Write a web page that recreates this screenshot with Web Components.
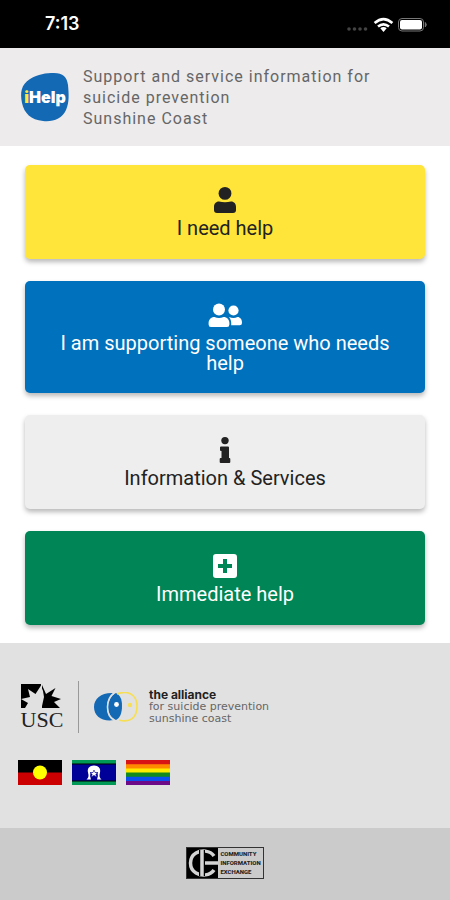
<!DOCTYPE html>
<html lang="en">
<head>
<meta charset="utf-8">
<meta name="viewport" content="width=device-width, initial-scale=1">
<title>iHelp</title>
<style>
  body {
    margin: 0;
    background-color: #fff;
    font-family: Roboto, "Noto Sans", sans-serif;
  }
</style>
</head>
<body>
<help-app></help-app>

<script>
const icons = {
  person: `
    <svg width="28" height="28" viewBox="0 0 28 28" fill="currentColor" aria-hidden="true">
      <circle cx="14" cy="7.4" r="6.4"/>
      <path d="M8 15.500q6 1.500 12 0c3.200 0 5 2.300 5 5.200v3.300q0 3-3 3H6q-3 0-3-3v-3.300c0-2.900 1.800-5.200 5-5.200z"/>
    </svg>`,
  people: `
    <svg width="34" height="28" viewBox="0 0 34 28" fill="currentColor" aria-hidden="true">
      <circle cx="11" cy="8.600" r="6"/>
      <path d="M6.500 16q4.500 2 9 0c3.600 0 5.900 2.700 5.900 6v1.500q0 2.500-2.400 2.500H3q-2.400 0-2.400-2.500V22c0-3.300 2.300-6 5.900-6z"/>
      <circle cx="25.500" cy="9.500" r="5.100"/>
      <path d="M21 16q4.500 1.800 8.500 0c2.500 0 4.500 2.500 4.500 5.200V22q0 2.300-2.300 2.300h-8.500c.3-3.300-.3-6-2.200-8.300z"/>
    </svg>`,
  info: `
    <svg width="28" height="28" viewBox="0 0 28 28" fill="currentColor" aria-hidden="true">
      <circle cx="14" cy="4.600" r="3.700"/>
      <path d="M10 10.500h7q1 0 1 1V22h.300q1 0 1 1v3q0 1-1 1H9.700q-1 0-1-1v-3q0-1 1-1h.800v-7H10q-1 0-1-1v-2.500q0-1 1-1z"/>
    </svg>`,
  plus: `
    <svg width="28" height="28" viewBox="0 0 28 28" fill="currentColor" aria-hidden="true">
      <path fill-rule="evenodd" d="M5 2h18q3 0 3 3v18q0 3-3 3H5q-3 0-3-3V5q0-3 3-3zM12 7v5H7v4h5v5h4v-5h5v-4h-5V7z"/>
    </svg>`
};

class StatusBar extends HTMLElement {
  constructor() {
    super();
    this.attachShadow({ mode: "open" });
  }

  connectedCallback() {
    this.shadowRoot.innerHTML = `
      <style>
        :host {
          display: flex;
          align-items: center;
          justify-content: space-between;
          height: 48px;
          padding: 0 22px 0 45px;
          background-color: #000;
          color: #fff;
        }

        time {
          font: 600 18px/20px Inter, sans-serif;
        }

        svg {
          display: block;
        }
      </style>
      <time>7:13</time>
      <svg width="82" height="18" viewBox="0 0 82 18" aria-label="Wi-Fi on, battery full">
        <g fill="#444">
          <circle cx="3" cy="14" r="1.800"/><circle cx="8.500" cy="14" r="1.800"/>
          <circle cx="14" cy="14" r="1.800"/><circle cx="19.500" cy="14" r="1.800"/>
        </g>
        <g fill="none" stroke="#fff" stroke-width="2.600">
          <path d="M28.600 8q8.900-7.800 17.800 0"/>
          <path d="M32 11.600q5.500-4.600 11 0"/>
        </g>
        <path d="M34.300 13.300q3.200-2.400 6.400 0L37.500 17z" fill="#fff"/>
        <rect x="52.500" y="3.500" width="25" height="12.500" rx="3.500" fill="none" stroke="#777"/>
        <rect x="54" y="5" width="22" height="9.500" rx="2" fill="#fff"/>
        <path d="M79.300 7.500q2 2.200 0 4.400z" fill="#777" stroke="#777"/>
      </svg>
    `;
  }
}

class AppHeader extends HTMLElement {
  constructor() {
    super();
    this.attachShadow({ mode: "open" });
  }

  connectedCallback() {
    this.shadowRoot.innerHTML = `
      <style>
        :host {
          display: flex;
          align-items: center;
          gap: 13px;
          min-height: 98px;
          padding: 0 20px;
          box-sizing: border-box;
          background-color: #edebec;
        }

        svg {
          flex: none;
        }

        p {
          margin: 0;
          color: #666;
          font-size: 16px;
          line-height: 21px;
          letter-spacing: 1px;
        }
      </style>
      <svg width="50" height="50" viewBox="0 0 50 50" role="img" aria-label="iHelp">
        <path d="M34 1C43 1 47 5 48 13c.800 9 1.500 17-2 25-4 9-13 12-23 11C11 48 4 41 2 31 0 20 1 13 10 7 18 2 26 1 34 1z" fill="#1469b5"/>
        <text x="25" y="31" text-anchor="middle" fill="#fff" font-family="Inter, sans-serif" font-size="16" font-weight="900"><tspan fill="#ffe838">i</tspan>Help</text>
      </svg>
      <p><slot></slot></p>
    `;
  }
}

class HelpButton extends HTMLElement {
  constructor() {
    super();
    this.attachShadow({ mode: "open" });
  }

  connectedCallback() {
    this.shadowRoot.innerHTML = `
      <style>
        :host {
          display: block;
          --back: #eee;
          --fore: #222;
        }

        :host([tone="yellow"]) {
          --back: #ffe53a;
        }

        :host([tone="blue"]) {
          --back: #0071bc;
          --fore: #fff;
        }

        :host([tone="green"]) {
          --back: #008556;
          --fore: #fff;
        }

        button {
          display: flex;
          flex-direction: column;
          align-items: center;
          justify-content: center;
          gap: 4px;
          width: 100%;
          min-height: 94px;
          padding: 20px 24px;
          border: none;
          border-radius: 5px;
          background-color: var(--back);
          color: var(--fore);
          box-shadow: 0 3px 5px rgba(0, 0, 0, 0.28);
          font-family: inherit;
          font-size: 20px;
          line-height: 20px;
          cursor: pointer;
        }

        svg {
          display: block;
        }
      </style>
      <button type="button">
        ${icons[this.getAttribute("icon")]}
        <span><slot></slot></span>
      </button>
    `;
  }
}

class PartnerLogos extends HTMLElement {
  constructor() {
    super();
    this.attachShadow({ mode: "open" });
  }

  connectedCallback() {
    this.shadowRoot.innerHTML = `
      <style>
        :host {
          display: flex;
          align-items: center;
        }

        svg {
          flex: none;
        }

        .alliance {
          display: flex;
          align-items: center;
          gap: 11px;
          height: 52px;
          margin-left: 12px;
          padding-left: 15px;
          border-left: 1px solid #999;
        }

        p {
          margin: 0;
          color: #666;
          font: 11px/12px "DejaVu Sans", sans-serif;
        }

        strong {
          display: block;
          color: #222;
          font: 700 12px/12px Inter, sans-serif;
        }
      </style>
      <svg width="48" height="52" viewBox="0 0 48 52" role="img" aria-label="USC">
        <path d="M3 3h20v24H3z"/>
        <path d="M24 27V4l4 9 9.500-6-4 8 9.500 3-7 3 6 6z"/>
        <path d="M23 4.500L17.500 13 10 8l2 8-9 2 7 4-3 5h16z" fill="#e1e1e1"/>
        <path d="M23 5l2 5 1 6-2 9h-1z" fill="#e1e1e1"/>
        <text x="24" y="46" text-anchor="middle" fill="#222" font-family="Liberation Serif, serif" font-size="22">USC</text>
      </svg>
      <div class="alliance">
        <svg width="44" height="30" viewBox="0 0 44 30" aria-hidden="true">
          <path d="M20 1C8 0 0 6 0 15s8 15 20 13q-7-5-7-13T20 1z" fill="#1469b5"/>
          <path d="M22 1c-5 2-8 8-8 14s3 11 8 13c4-2 6-7 6-14S26 3 22 1z" fill="#1469b5"/>
          <path d="M20 1c-4 3-6.500 8-6.500 14S16 26 20 28" fill="none" stroke="#e1e1e1" stroke-width="1.600"/>
          <path d="M23 2C33-2 43 2 43 14S36 31 25 28" fill="none" stroke="#f6df55" stroke-width="1.700"/>
          <circle cx="22.500" cy="12.500" r="2.400" fill="#fff"/>
          <circle cx="36" cy="13" r="2.200" fill="#f6df55"/>
        </svg>
        <p><strong>the alliance</strong>for suicide prevention<br>sunshine coast</p>
      </div>
    `;
  }
}

class FlagRow extends HTMLElement {
  constructor() {
    super();
    this.attachShadow({ mode: "open" });
  }

  connectedCallback() {
    this.shadowRoot.innerHTML = `
      <style>
        :host {
          display: flex;
          gap: 10px;
        }
      </style>
      <svg width="44" height="25" viewBox="0 0 44 25" role="img" aria-label="Aboriginal flag">
        <path d="M0 0h44v13H0z"/>
        <path d="M0 12.500h44V25H0z" fill="#c00"/>
        <circle cx="22" cy="12.500" r="7" fill="#ff0"/>
      </svg>
      <svg width="44" height="25" viewBox="0 0 44 25" role="img" aria-label="Torres Strait Islander flag">
        <path d="M0 0h44v25H0z" fill="#095"/>
        <path d="M0 3.500h44v18H0z" fill="#000"/>
        <path d="M0 4.500h44v16H0z" fill="#009"/>
        <path d="M14.500 19.500q3-2 1.500-7c-1-4 1.500-7 6-7s7 3 6 7q-1.500 5 1.500 7h-4.500q1.500-4 .5-7h-7q-1 3 .5 7z" fill="#fff"/>
        <path d="M22 10l1 2.500h3l-2.200 1.800 1 2.700-2.800-1.600-2.800 1.600 1-2.700L18 12.500h3z" fill="#fff" stroke="#009" stroke-width=".6"/>
      </svg>
      <svg width="44" height="25" viewBox="0 0 44 25" role="img" aria-label="Pride flag">
        <path d="M0 0h44v25H0z" fill="#d91414"/>
        <path d="M0 4.200h44V25H0z" fill="#ff8c00"/>
        <path d="M0 8.400h44V25H0z" fill="#ffed00"/>
        <path d="M0 12.600h44V25H0z" fill="#128a1c"/>
        <path d="M0 16.700h44V25H0z" fill="#0b50ee"/>
        <path d="M0 20.900h44V25H0z" fill="#6d0a87"/>
      </svg>
    `;
  }
}

class ExchangeLogo extends HTMLElement {
  constructor() {
    super();
    this.attachShadow({ mode: "open" });
  }

  connectedCallback() {
    this.shadowRoot.innerHTML = `
      <style>
        :host {
          display: flex;
          border: 1px solid #333;
        }

        svg {
          display: block;
        }

        p {
          margin: 0;
          padding: 1px 2px;
          color: #222;
          font-size: 6px;
          font-weight: 800;
          line-height: 9px;
        }
      </style>
      <svg width="31" height="30" viewBox="0 0 31 30" aria-hidden="true">
        <path d="M0 0h31v30H0z"/>
        <g fill="none" stroke="#d4d4d4" stroke-width="3.500">
          <path d="M27 8C23 2 14 2 9 5S3.500 12 3.500 15 4 22 9 25s14 3 18-3"/>
          <path d="M17 15h14"/>
          <path d="M15 2v26" stroke="#000" stroke-width="6"/>
          <path d="M15 2v26"/>
        </g>
      </svg>
      <p>COMMUNITY<br>INFORMATION<br>EXCHANGE</p>
    `;
  }
}

class HelpApp extends HTMLElement {
  constructor() {
    super();
    this.attachShadow({ mode: "open" });
  }

  connectedCallback() {
    this.shadowRoot.innerHTML = `
      <style>
        :host {
          display: flex;
          flex-direction: column;
          min-height: 100vh;
        }

        main {
          display: flex;
          flex-direction: column;
          gap: 22px;
          padding: 19px 25px 18px;
        }

        .partners {
          display: flex;
          flex-direction: column;
          gap: 27px;
          padding: 38px 18px 43px;
          background-color: #e1e1e1;
        }

        .bottom {
          display: flex;
          flex: 1;
          align-items: center;
          justify-content: center;
          padding: 18px 0 20px;
          background-color: #cbcbcb;
        }
      </style>
      <status-bar></status-bar>
      <app-header>Support and service information for<br>suicide prevention<br>Sunshine Coast</app-header>
      <main>
        <help-button tone="yellow" icon="person">I need help</help-button>
        <help-button tone="blue" icon="people">I am supporting someone who needs help</help-button>
        <help-button icon="info">Information &amp; Services</help-button>
        <help-button tone="green" icon="plus">Immediate help</help-button>
      </main>
      <section class="partners">
        <partner-logos></partner-logos>
        <flag-row></flag-row>
      </section>
      <footer class="bottom">
        <exchange-logo></exchange-logo>
      </footer>
    `;
  }
}

customElements.define("status-bar", StatusBar);
customElements.define("app-header", AppHeader);
customElements.define("help-button", HelpButton);
customElements.define("partner-logos", PartnerLogos);
customElements.define("flag-row", FlagRow);
customElements.define("exchange-logo", ExchangeLogo);
customElements.define("help-app", HelpApp);
</script>
</body>
</html>
